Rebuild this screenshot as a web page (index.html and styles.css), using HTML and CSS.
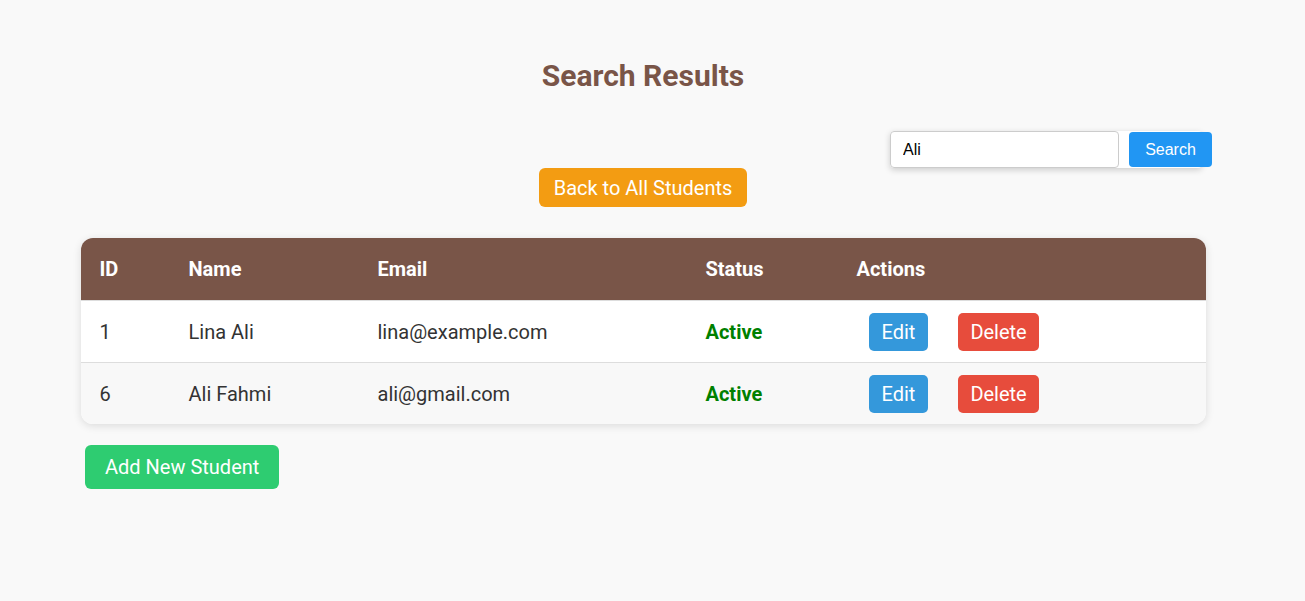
FILE: index.html
```html
<!DOCTYPE html>
<html lang="en">
<head>
<meta charset="utf-8">
<title>Search Results</title>
<link rel="stylesheet" href="styles.css">
</head>
<body>
<div class="page">
  <h1 class="title">Search Results</h1>
  <div class="search-row">
    <form class="search-form">
      <input class="search-input" type="text" value="Ali">
      <button class="search-btn" type="button">Search</button>
    </form>
  </div>
  <div class="back-row">
    <a class="btn btn-back" href="#">Back to All Students</a>
  </div>
  <table class="students">
    <thead>
      <tr>
        <th class="c-id">ID</th>
        <th class="c-name">Name</th>
        <th class="c-email">Email</th>
        <th class="c-status">Status</th>
        <th class="c-actions">Actions</th>
      </tr>
    </thead>
    <tbody>
      <tr>
        <td>1</td>
        <td>Lina Ali</td>
        <td>lina@example.com</td>
        <td class="active">Active</td>
        <td class="actions"><a class="btn btn-edit" href="#">Edit</a><a class="btn btn-delete" href="#">Delete</a></td>
      </tr>
      <tr>
        <td>6</td>
        <td>Ali Fahmi</td>
        <td>ali@gmail.com</td>
        <td class="active">Active</td>
        <td class="actions"><a class="btn btn-edit" href="#">Edit</a><a class="btn btn-delete" href="#">Delete</a></td>
      </tr>
    </tbody>
  </table>
  <div class="add-row">
    <a class="btn btn-add" href="#">Add New Student</a>
  </div>
</div>
</body>
</html>
```

FILE: styles.css
```css
html, body {
  margin: 0;
  padding: 0;
  background: #f9f9f9;
  font-family: Roboto, "Liberation Sans", Arial, sans-serif;
  color: #333;
}

.page {
  width: 1250px;
  margin-left: 18px;
  padding-top: 58px;
}

.title {
  margin: 0;
  text-align: center;
  font-size: 30px;
  line-height: 35px;
  font-weight: 700;
  color: #795548;
}

.search-row {
  display: flex;
  justify-content: flex-end;
  padding-right: 66px;
  margin-top: 38px;
}

.search-form {
  display: flex;
  align-items: flex-start;
  width: 312px;
  margin: 0;
  background: #fff;
  border-radius: 4px;
  box-shadow: 0 2px 6px rgba(0, 0, 0, 0.18);
}

.search-input {
  box-sizing: border-box;
  width: 229px;
  height: 37px;
  flex-shrink: 0;
  border: 1px solid #ccc;
  border-radius: 4px;
  padding: 0 12px;
  font-family: "Liberation Sans", Arial, sans-serif;
  font-size: 16px;
  color: #000;
  background: #fff;
}

.search-btn {
  box-sizing: border-box;
  flex-shrink: 0;
  width: 83px;
  height: 35px;
  margin-left: 10px;
  margin-top: 1px;
  border: none;
  border-radius: 4px;
  background: #2196f3;
  color: #fff;
  font-family: "Liberation Sans", Arial, sans-serif;
  font-size: 16px;
}

.back-row {
  text-align: center;
  margin-top: 0;
}

.btn {
  display: inline-block;
  text-decoration: none;
  color: #fff;
  font-size: 20px;
  line-height: 23px;
}

.btn-back {
  background: #f39c12;
  padding: 9px 15px 7px;
  border-radius: 6px;
}

.students {
  width: 90%;
  margin: 31px auto 0;
  border-collapse: separate;
  border-spacing: 0;
  background: #fff;
  border-radius: 12px;
  overflow: hidden;
  box-shadow: 0 2px 8px rgba(0, 0, 0, 0.12);
  font-size: 20px;
}

.students th,
.students td {
  text-align: left;
  padding: 0 19px;
  height: 62px;
  box-sizing: border-box;
}

.students th {
  background: #795548;
  color: #fff;
  font-weight: 700;
}

.students td {
  color: #333;
  border-top: 1px solid #ddd;
}

.students tbody tr:nth-child(2) td {
  background: #f8f8f8;
}

.c-id { width: 89px; }
.c-name { width: 189px; }
.c-email { width: 328px; }
.c-status { width: 151px; }

.students td.active {
  color: #008000;
  font-weight: 700;
}

.actions .btn {
  padding: 8px 12px 7px;
  border-radius: 5px;
}

.actions .btn-edit {
  background: #3498db;
  margin-left: 12px;
  padding-left: 13px;
  padding-right: 13px;
}

.actions .btn-delete {
  background: #e74c3c;
  margin-left: 30px;
}

.add-row {
  margin-top: 21px;
  padding-left: 67px;
}

.btn-add {
  background: #2ecc71;
  padding: 11px 20px 10px;
  border-radius: 6px;
}
```
